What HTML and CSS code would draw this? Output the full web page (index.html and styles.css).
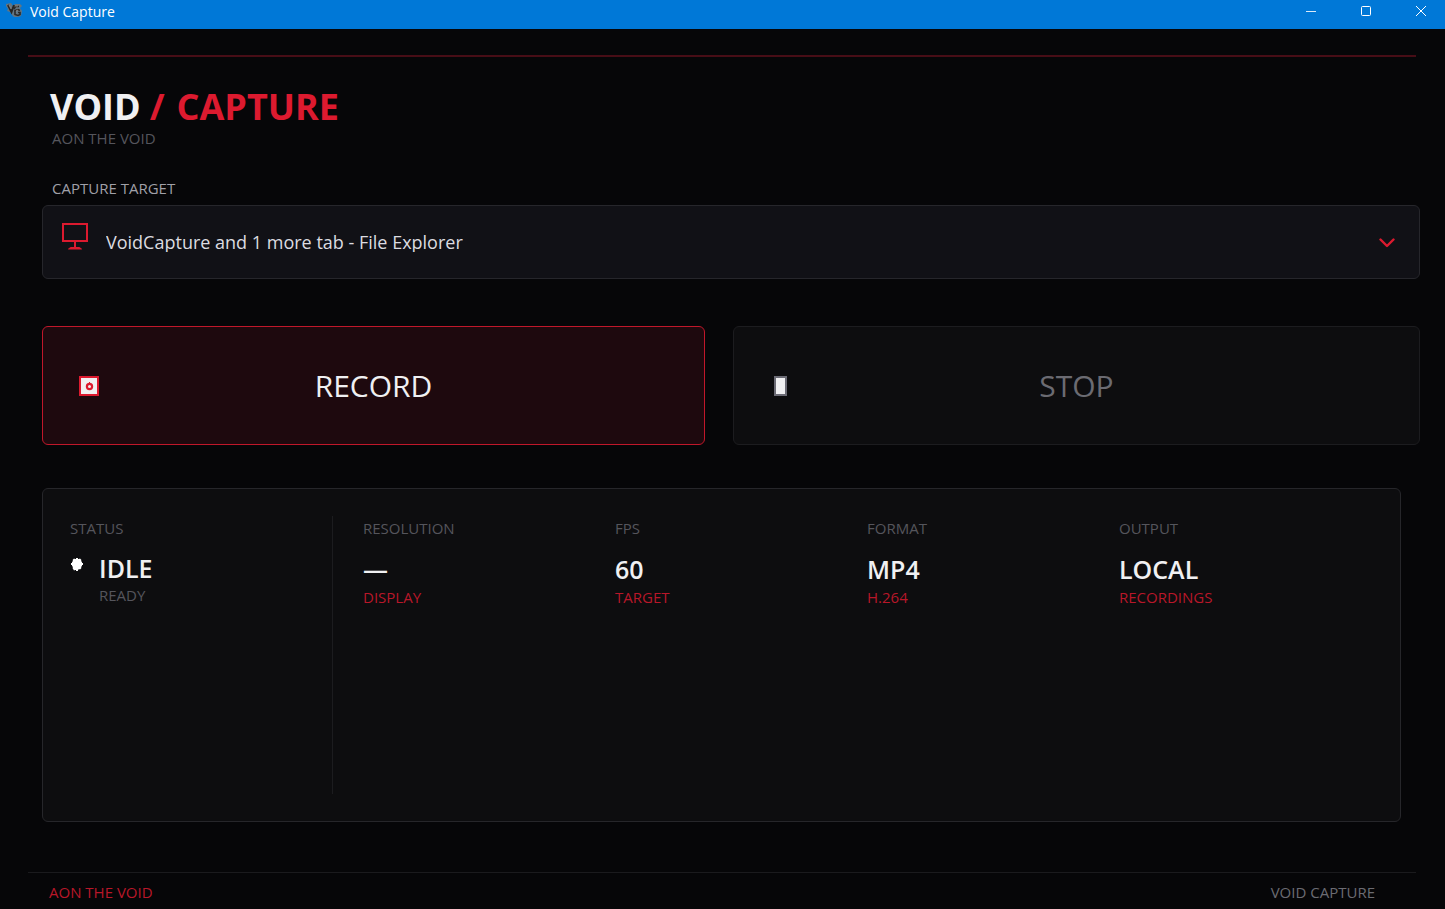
FILE: index.html
```html
<!DOCTYPE html>
<html lang="en">
<head>
<meta charset="utf-8">
<meta name="viewport" content="width=device-width, initial-scale=1">
<title>Void Capture</title>
<link rel="stylesheet" href="styles.css">
</head>
<body>
<div class="titlebar">
  <svg class="app-icon" width="16" height="16" viewBox="0 0 16 16" fill="none" aria-hidden="true">
    <path d="M0 2l5-1 2 3 2-2h5l2 2-2 2 2 3-1 5-3 1H8l-2-2-2-3-3-1 1-2-2-3z" fill="#6d7479" opacity=".9"/>
    <path d="M2 3l3.500 7L8 3" stroke="#262524" stroke-width="2"/>
    <path d="M13 4.500H9.500L8 7M14 8.500l-2-1-3 1v4l3 1 2-1v-2h-2" stroke="#2b2928" stroke-width="1.600"/>
    <path d="M3 3l2 4M9 4h3M10 9l2-1" stroke="#a9a49c" stroke-width=".7"/>
  </svg>
  <span class="window-title">Void Capture</span>
  <div class="window-controls">
    <button class="window-button" type="button" aria-label="Minimize">
      <svg width="12" height="12" viewBox="0 0 12 12"><path d="M1 6.500h10" stroke="#fff" opacity=".85"/></svg>
    </button>
    <button class="window-button" type="button" aria-label="Maximize">
      <svg width="12" height="12" viewBox="0 0 12 12"><rect x="1.500" y="1.500" width="9" height="9" rx="1" fill="none" stroke="#fff"/></svg>
    </button>
    <button class="window-button" type="button" aria-label="Close">
      <svg width="12" height="12" viewBox="0 0 12 12"><path d="M1 1l10 10M11 1L1 11" stroke="#fff"/></svg>
    </button>
  </div>
</div>
<div class="app">
  <header class="header">
    <h1 class="brand"><span>VOID</span> <span class="brand-accent"><span>/</span> <span>CAPTURE</span></span></h1>
    <p class="tagline">AON THE VOID</p>
  </header>
  <main class="content">
    <label class="target-label" for="target">CAPTURE TARGET</label>
    <div class="target">
      <select class="target-select" id="target">
        <option>VoidCapture and 1 more tab - File Explorer</option>
      </select>
      <svg class="target-icon" width="26" height="27" viewBox="0 0 26 27" fill="none" stroke="#dc1a2f" stroke-width="2" aria-hidden="true">
        <path d="M1 1h24v17H1zM13 18v7"/><path d="M6.500 26l2-1.500h9l2 1.500z" fill="#dc1a2f" stroke-width="1"/>
      </svg>
      <svg class="target-chevron" width="16" height="10" viewBox="0 0 16 10" fill="none" stroke="#dc1a2f" stroke-width="2.400" stroke-linecap="round" stroke-linejoin="round" aria-hidden="true">
        <path d="M1.500 1.500L8 8l6.500-6.500"/>
      </svg>
    </div>
    <div class="actions">
      <button class="action action-record" type="button">
        <svg width="20" height="20" viewBox="0 0 20 20" aria-hidden="true">
          <rect x="1" y="1" width="18" height="18" fill="#f0f0f2" stroke="#dc1a2f" stroke-width="2"/>
          <circle cx="10.500" cy="10.500" r="2.600" fill="none" stroke="#dc1a2f" stroke-width="2.200"/>
          <path d="M10 6h1v2h-1z" fill="#dc1a2f"/>
        </svg>
        <span>RECORD</span>
      </button>
      <button class="action action-stop" type="button">
        <svg width="20" height="20" viewBox="0 0 20 20" aria-hidden="true">
          <rect x="5" y="1" width="11" height="18" fill="#f0f0f2" stroke="#6b6b75" stroke-width="2"/>
        </svg>
        <span>STOP</span>
      </button>
    </div>
    <section class="panel">
      <div class="status">
        <h2 class="caption">STATUS</h2>
        <div class="status-row">
          <svg class="status-dot" width="14" height="14" viewBox="0 0 14 14" aria-hidden="true">
            <path d="M6 1h2v1h1l1-.5 1.500 1.500-.5 1 1 1v1h1v2h-1v1l-1 1 .5 1-1.500 1.500-1-.5-1 1v1H6v-1H5l-1 .5L2.500 11l.5-1-1-1V8H1V6h1V5l1-1-.5-1L4 1.500l1 .5h1z" fill="#fff"/>
          </svg>
          <div>
            <p class="value">IDLE</p>
            <p class="caption">READY</p>
          </div>
        </div>
      </div>
      <div class="metrics">
        <div class="metric"><h2 class="caption">RESOLUTION</h2><p class="value">—</p><p class="note">DISPLAY</p></div>
        <div class="metric"><h2 class="caption">FPS</h2><p class="value">60</p><p class="note">TARGET</p></div>
        <div class="metric"><h2 class="caption">FORMAT</h2><p class="value">MP4</p><p class="note">H.264</p></div>
        <div class="metric"><h2 class="caption">OUTPUT</h2><p class="value">LOCAL</p><p class="note">RECORDINGS</p></div>
      </div>
    </section>
  </main>
  <footer class="footer">
    <span class="footer-brand">AON THE VOID</span>
    <span>VOID CAPTURE</span>
  </footer>
</div>
</body>
</html>
```
FILE: styles.css
```css
* {
  box-sizing: border-box;
}

body {
  margin: 0;
  min-height: 100vh;
  display: flex;
  flex-direction: column;
  background: #060608;
  color: #f0f0f2;
  font: 15px/20px "Open Sans", "Noto Sans", sans-serif;
}

h1, h2, p {
  margin: 0;
}

button, select {
  font: inherit;
  color: inherit;
}

.titlebar {
  display: flex;
  height: 29px;
  padding-left: 6px;
  background: #0078d7;
  color: #fff;
}

.app-icon {
  margin-top: 2px;
}

.window-title {
  margin-left: 8px;
  font-size: 14px;
  line-height: 23px;
}

.window-controls {
  display: flex;
  margin-left: auto;
}

.window-button {
  display: flex;
  justify-content: flex-end;
  align-items: flex-start;
  width: 55px;
  padding: 5px 18px 0 0;
  border: 0;
  background: none;
}

.app {
  flex: 1;
  display: flex;
  flex-direction: column;
  padding: 26px 29px 0 28px;
}

.header {
  border-top: 2px solid #470d16;
  padding: 29px 22px 0;
}

.brand {
  display: flex;
  gap: 9px;
  font-size: 36px;
  line-height: 42px;
  font-weight: 700;
}

.brand-accent {
  display: flex;
  gap: 12px;
  color: #dc1a2f;
}

.tagline {
  padding-left: 2px;
  color: #55555c;
}

.content {
  flex: 1;
  display: flex;
  flex-direction: column;
  margin: 30px -4px 0 14px;
}

.target-label {
  padding-left: 10px;
  color: #a0a0a8;
}

.target {
  position: relative;
  margin-top: 7px;
}

.target-select {
  display: block;
  width: 100%;
  height: 74px;
  padding: 0 60px 0 63px;
  appearance: none;
  border: 1px solid #26262b;
  border-radius: 6px;
  background: #111116;
  color: #dcdce0;
  font-size: 18px;
}

.target-icon {
  position: absolute;
  left: 20px;
  top: 18px;
  pointer-events: none;
}

.target-chevron {
  position: absolute;
  right: 25px;
  top: 33px;
  pointer-events: none;
}

.actions {
  display: grid;
  grid-template-columns: 663fr 687fr;
  gap: 28px;
  margin-top: 47px;
}

.action {
  display: grid;
  grid-template-columns: 1fr auto 1fr;
  align-items: center;
  height: 119px;
  padding: 0 36px;
  border: 1px solid #1c1c1f;
  border-radius: 6px;
  background: #0d0d0f;
  color: #6b6b72;
  font-size: 30px;
  line-height: 40px;
  font-weight: 500;
}

.action-record {
  border-color: #c0172a;
  background: #1e090e;
  color: #f0f0f2;
}

.panel {
  flex: 1;
  display: flex;
  margin: 43px 19px 50px 0;
  padding: 27px;
  border: 1px solid #26262a;
  border-radius: 6px;
  background: #0d0d0f;
}

.caption {
  color: #55555c;
  font-size: 15px;
  font-weight: 400;
}

.value {
  font-size: 25px;
  line-height: 34px;
  font-weight: 600;
}

.note {
  color: #b81729;
}

.status {
  width: 263px;
  padding-top: 2px;
  border-right: 1px solid #1c1c1f;
}

.status-row {
  display: flex;
  gap: 15px;
  margin-top: 13px;
}

.status-dot {
  margin-top: 6px;
}

.metrics {
  flex: 1;
  display: grid;
  grid-template-columns: repeat(4, 1fr);
  padding-left: 30px;
  margin-right: 2px;
}

.metric {
  padding-top: 2px;
}

.metric .value {
  margin: 14px 0 1px;
}

.footer {
  display: flex;
  justify-content: space-between;
  padding: 9px 41px 7px 21px;
  border-top: 1px solid #1a1a1d;
  color: #6b6b72;
}

.footer-brand {
  color: #b81729;
}
```
